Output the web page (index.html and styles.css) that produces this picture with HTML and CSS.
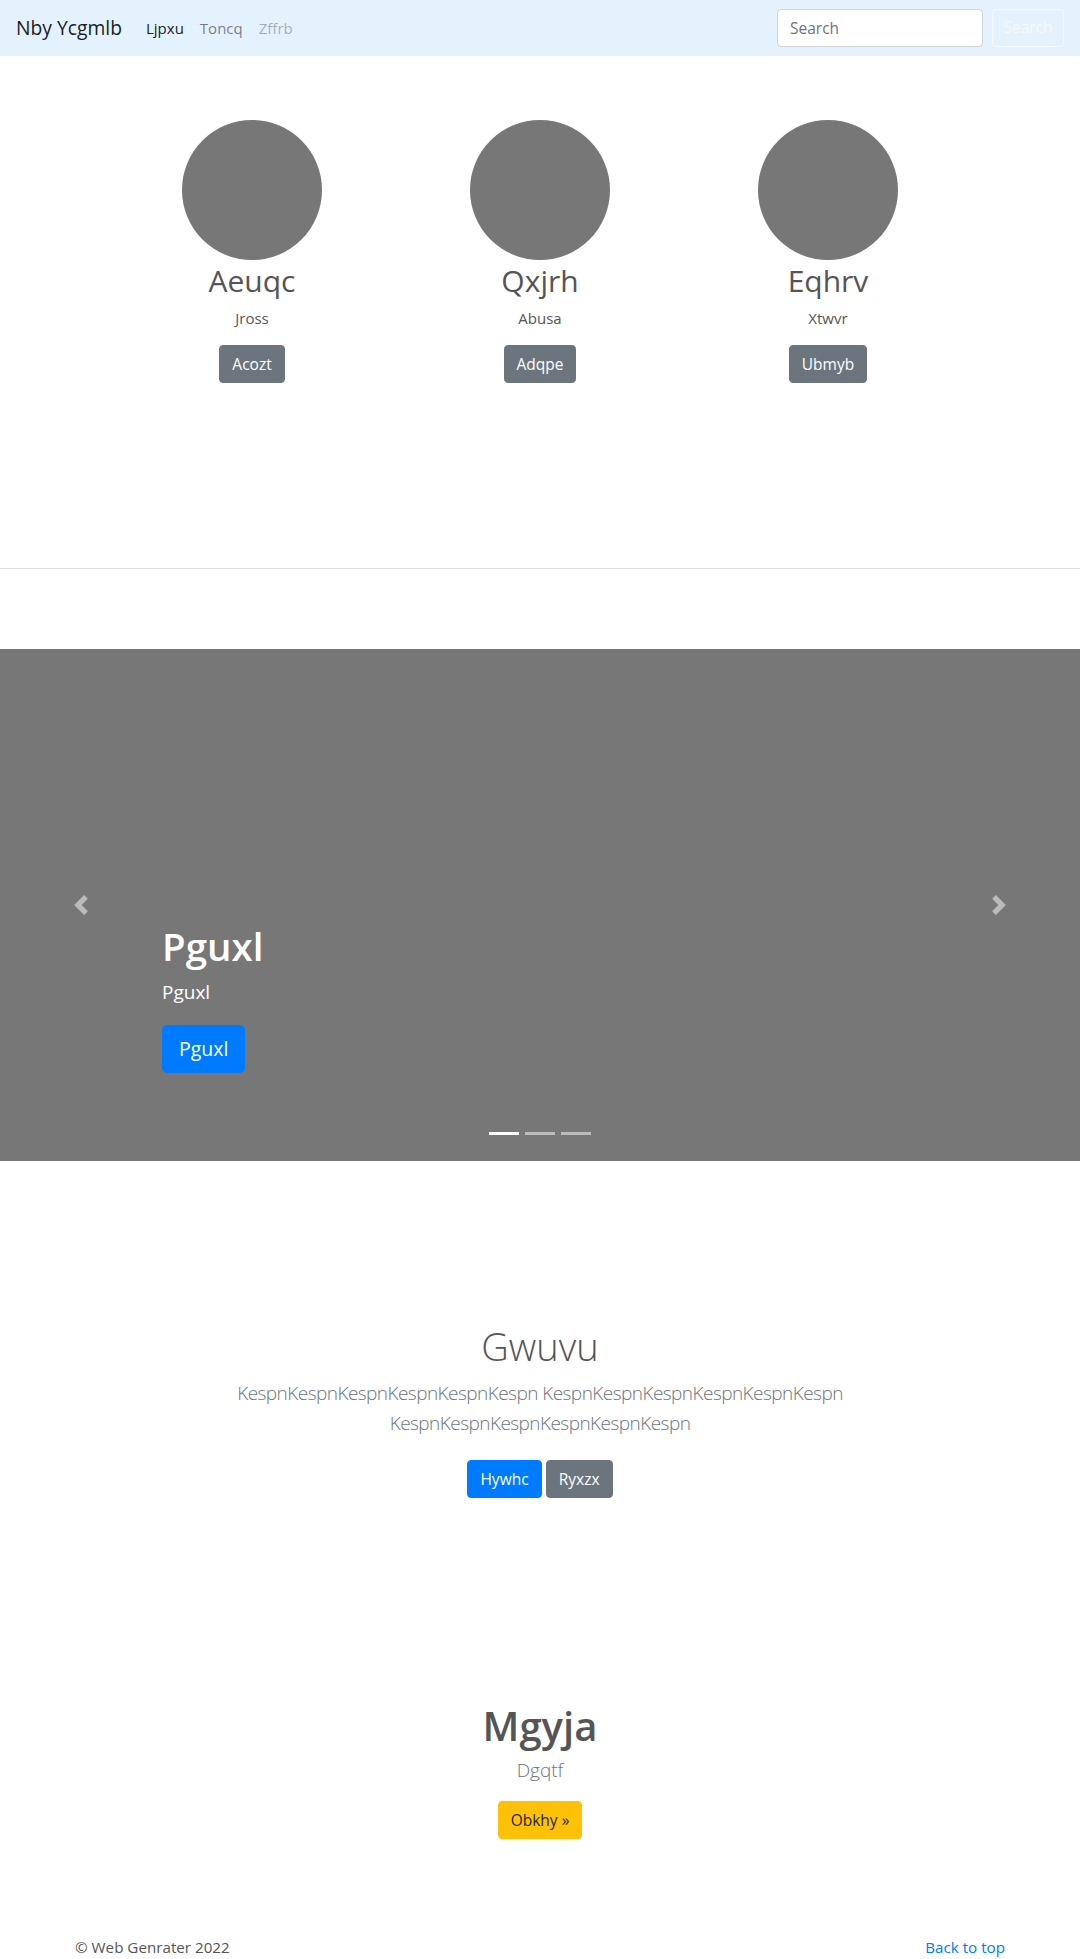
FILE: index.html
```html
<!DOCTYPE html>
<html lang="en">
<head>
<meta charset="utf-8">
<title>Nby Ycgmlb</title>
<link rel="stylesheet" href="styles.css">
</head>
<body>
<nav class="navbar">
  <a class="brand" href="#">Nby Ycgmlb</a>
  <ul class="nav-links">
    <li><a class="nav-link active" href="#">Ljpxu</a></li>
    <li><a class="nav-link" href="#">Toncq</a></li>
    <li><a class="nav-link disabled" href="#">Zffrb</a></li>
  </ul>
  <form class="search">
    <input class="search-input" type="text" placeholder="Search">
    <button class="search-btn" type="button">Search</button>
  </form>
</nav>

<section class="team">
  <div class="team-row">
    <div class="member">
      <div class="avatar"></div>
      <h2 class="member-name">Aeuqc</h2>
      <p class="member-role">Jross</p>
      <a class="btn btn-secondary" href="#">Acozt</a>
    </div>
    <div class="member">
      <div class="avatar"></div>
      <h2 class="member-name">Qxjrh</h2>
      <p class="member-role">Abusa</p>
      <a class="btn btn-secondary" href="#">Adqpe</a>
    </div>
    <div class="member">
      <div class="avatar"></div>
      <h2 class="member-name">Eqhrv</h2>
      <p class="member-role">Xtwvr</p>
      <a class="btn btn-secondary" href="#">Ubmyb</a>
    </div>
  </div>
</section>

<hr class="divider">

<div class="carousel">
  <a class="carousel-control prev" href="#">
    <svg class="chevron" viewBox="0 0 8 8" width="20" height="20"><path d="M5.25 0l-4 4 4 4 1.5-1.5L4.25 4l2.5-2.5L5.25 0z"/></svg>
  </a>
  <div class="carousel-caption">
    <h1 class="caption-title">Pguxl</h1>
    <p class="caption-text">Pguxl</p>
    <a class="btn btn-lg btn-primary" href="#">Pguxl</a>
  </div>
  <a class="carousel-control next" href="#">
    <svg class="chevron" viewBox="0 0 8 8" width="20" height="20"><path d="M2.75 0l-1.5 1.5L3.75 4l-2.5 2.5L2.75 8l4-4-4-4z"/></svg>
  </a>
  <ol class="indicators">
    <li class="indicator active"></li>
    <li class="indicator"></li>
    <li class="indicator"></li>
  </ol>
</div>

<section class="intro">
  <h1 class="intro-title">Gwuvu</h1>
  <p class="intro-lead">KespnKespnKespnKespnKespnKespn KespnKespnKespnKespnKespnKespn KespnKespnKespnKespnKespnKespn</p>
  <div class="intro-actions">
    <a class="btn btn-primary" href="#">Hywhc</a>
    <a class="btn btn-secondary" href="#">Ryxzx</a>
  </div>
</section>

<section class="feature">
  <h2 class="feature-title">Mgyja</h2>
  <p class="feature-lead">Dgqtf</p>
  <a class="btn btn-warning" href="#">Obkhy &raquo;</a>
</section>

<footer class="footer">
  <p class="copy">&copy; Web Genrater 2022</p>
  <a class="back-top" href="#">Back to top</a>
</footer>
</body>
</html>
```

FILE: styles.css
```css
* { box-sizing: border-box; }

body {
  margin: 0;
  font-family: "Open Sans", "Noto Sans", "DejaVu Sans", sans-serif;
  font-size: 16px;
  line-height: 1.5;
  color: #555;
  background: #fff;
}

a { text-decoration: none; }

/* Navbar */
.navbar {
  height: 56px;
  background: #e3f2fd;
  display: flex;
  align-items: center;
  padding: 0 16px;
}
.brand {
  font-size: 19.3px;
  line-height: 30px;
  color: rgba(0, 0, 0, 0.9);
  margin-right: 16px;
}
.nav-links {
  display: flex;
  list-style: none;
  margin: 0;
  padding: 0;
  flex: 1;
}
.nav-link {
  display: block;
  padding: 8px;
  font-size: 15px;
  color: rgba(0, 0, 0, 0.5);
}
.nav-link.active { color: rgba(0, 0, 0, 0.9); }
.nav-link.disabled { color: rgba(0, 0, 0, 0.3); }

.search {
  display: flex;
  gap: 9px;
  margin: 0;
}
.search-input {
  width: 206px;
  height: 38px;
  border: 1px solid #ced4da;
  border-radius: 4px;
  padding: 6px 12px;
  font: inherit;
  font-size: 15.5px;
  color: #495057;
  background: #fff;
}
.search-input::placeholder { color: #6c757d; }
.search-btn {
  width: 72px;
  height: 38px;
  border: 1px solid #f8f9fa;
  border-radius: 4px;
  background: transparent;
  color: #f8f9fa;
  font: inherit;
  font-size: 15.5px;
}

/* Buttons */
.btn {
  display: inline-block;
  padding: 6px 12px;
  font-size: 15.5px;
  line-height: 24px;
  border-radius: 4px;
  color: #fff;
  border: 1px solid transparent;
}
.btn-secondary { background: #6c757d; border-color: #6c757d; }
.btn-primary { background: #007bff; border-color: #007bff; }
.btn-warning { background: #ffc107; border-color: #ffc107; color: #212529; }
.btn-lg {
  padding: 8px 16px;
  font-size: 19.5px;
  line-height: 30px;
  border-radius: 5px;
}

/* Team */
.team {
  padding: 64px 0 185px;
}
.team-row {
  width: 864px;
  margin: 0 auto;
  display: grid;
  grid-template-columns: repeat(3, 1fr);
  text-align: center;
}
.avatar {
  width: 140px;
  height: 140px;
  border-radius: 50%;
  background: #777;
  margin: 0 auto;
}
.member-name {
  font-size: 30px;
  font-weight: 400;
  line-height: 36px;
  margin: 3px 0 0;
  color: #555;
}
.member-role {
  font-size: 15px;
  line-height: 22px;
  margin: 8px 0 16px;
}

.divider {
  border: 0;
  border-top: 1px solid #dedede;
  margin: 0;
}

/* Carousel */
.carousel {
  position: relative;
  height: 512px;
  margin-top: 80px;
  background: #777;
}
.carousel-control {
  position: absolute;
  top: 0;
  bottom: 0;
  width: 15%;
  display: flex;
  align-items: center;
  justify-content: center;
  opacity: 0.5;
}
.carousel-control.prev { left: 0; }
.carousel-control.next { right: 0; }
.chevron { fill: #fff; display: block; }
.carousel-caption {
  position: absolute;
  left: 15%;
  right: 15%;
  bottom: 88px;
  color: #fff;
  text-align: left;
}
.caption-title {
  font-size: 38.5px;
  line-height: 48px;
  font-weight: 600;
  margin: 0 0 8px;
}
.caption-text {
  font-size: 19px;
  line-height: 28px;
  margin: 0 0 19px;
}
.indicators {
  position: absolute;
  left: 0;
  right: 0;
  bottom: 26px;
  display: flex;
  justify-content: center;
  list-style: none;
  margin: 0;
  padding: 0;
}
.indicator {
  width: 30px;
  height: 3px;
  margin: 0 3px;
  background: rgba(255, 255, 255, 0.5);
}
.indicator.active { background: #fff; }

/* Intro */
.intro {
  text-align: center;
  padding-top: 161px;
}
.intro-title {
  font-size: 38px;
  font-weight: 300;
  line-height: 48px;
  margin: 0;
  color: #555;
}
.intro-lead {
  width: 700px;
  margin: 8px auto 22px;
  font-size: 19px;
  letter-spacing: -0.55px;
  font-weight: 300;
  line-height: 30px;
  color: #6c757d;
}

/* Feature */
.feature {
  text-align: center;
  padding-top: 204px;
}
.feature-title {
  font-size: 40px;
  font-weight: 600;
  line-height: 48px;
  margin: 0;
  color: #555;
}
.feature-lead {
  font-size: 19px;
  font-weight: 300;
  line-height: 28px;
  margin: 6px 0 17px;
  color: #6c757d;
}

/* Footer */
.footer {
  width: 930px;
  margin: 97px auto 0;
  display: flex;
  justify-content: space-between;
  align-items: baseline;
  font-size: 15.2px;
}
.copy { margin: 0; color: #555; }
.back-top { color: #007bff; }
```
